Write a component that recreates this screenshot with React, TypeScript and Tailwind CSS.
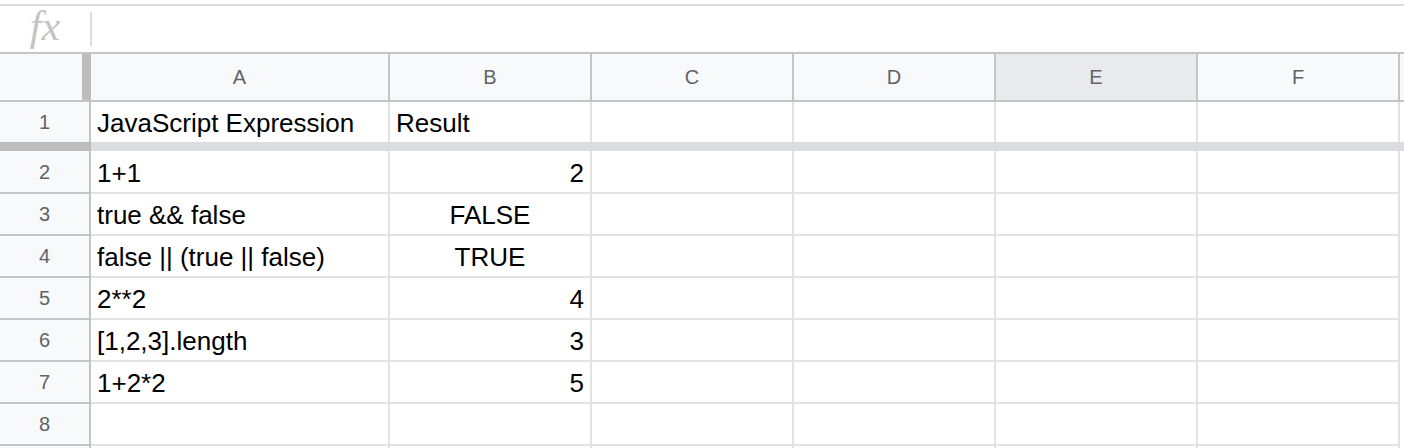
import React from "react";

type Align = "left" | "right" | "center";
type Cell = { text: string; align: Align };

const columns = [
    { label: "A", width: "w-[299px]" },
    { label: "B", width: "w-[202px]" },
    { label: "C", width: "w-[202px]" },
    { label: "D", width: "w-[202px]" },
    { label: "E", width: "w-[202px]" },
    { label: "F", width: "w-[202px]" },
];

const header: Cell[] = [
    { text: "JavaScript Expression", align: "left" },
    { text: "Result", align: "left" },
];

// rows 2..9 (row 9 only peeks in at the bottom)
const rows: Cell[][] = [
    [{ text: "1+1", align: "left" }, { text: "2", align: "right" }],
    [{ text: "true && false", align: "left" }, { text: "FALSE", align: "center" }],
    [{ text: "false || (true || false)", align: "left" }, { text: "TRUE", align: "center" }],
    [{ text: "2**2", align: "left" }, { text: "4", align: "right" }],
    [{ text: "[1,2,3].length", align: "left" }, { text: "3", align: "right" }],
    [{ text: "1+2*2", align: "left" }, { text: "5", align: "right" }],
    [],
    [],
];

const alignClass = (a: Align) =>
    a === "right" ? "justify-end pr-[6px]" : a === "center" ? "justify-center" : "justify-start pl-[6px]";

function DataRow({ num, cells, height }: { num: number | null; cells: Cell[]; height: string }) {
    return (
        <div className={`flex ${height}`}>
            <div className="w-[91px] shrink-0 flex items-center justify-center bg-[#f8f9fa] border-r-2 border-b-2 border-[#c4c4c4] text-[20px] text-[#5f6368]">
                {num}
            </div>
            {columns.map((col, i) => {
                const cell = cells[i];
                return (
                    <div
                        key={col.label}
                        className={`${col.width} shrink-0 flex items-center pt-[3px] border-r-2 border-b-2 border-[#e2e2e3] text-[26px] text-black whitespace-nowrap overflow-hidden ${cell ? alignClass(cell.align) : ""}`}
                    >
                        {cell?.text}
                    </div>
                );
            })}
        </div>
    );
}

export default function App() {
    return (
        <div className="w-[1404px] h-[448px] overflow-hidden bg-white font-['Liberation_Sans',Arial,sans-serif]">
            {/* formula bar */}
            <div className="pt-[4px]">
                <div className="h-[50px] border-t-2 border-b-2 border-t-[#dcdcdc] border-b-[#c4c4c4] flex items-center">
                    <div className="w-[90px] flex justify-center">
                        <span className="font-['Liberation_Serif',serif] italic text-[42px] leading-none text-[#c4c4c4] -mt-[6px]">fx</span>
                    </div>
                    <div className="w-[2px] h-[34px] bg-[#dadce0]" />
                </div>
            </div>

            {/* column headers */}
            <div className="flex h-[48px] bg-[#f8f9fa] border-b-2 border-[#c4c4c4]">
                <div className="w-[91px] shrink-0 flex">
                    <div className="w-[82px]" />
                    <div className="w-[9px] bg-[#bdbdbd]" />
                </div>
                {columns.map((col) => (
                    <div
                        key={col.label}
                        className={`${col.width} shrink-0 flex items-center justify-center border-r-2 border-[#c4c4c4] text-[20px] text-[#5f6368] ${col.label === "E" ? "bg-[#e8eaed]" : ""}`}
                    >
                        {col.label}
                    </div>
                ))}
            </div>

            {/* frozen row 1 */}
            <div className="flex h-[40px]">
                <div className="w-[91px] shrink-0 flex items-center justify-center bg-[#f8f9fa] border-r-2 border-[#c4c4c4] text-[20px] text-[#5f6368]">
                    1
                </div>
                {columns.map((col, i) => {
                    const cell = header[i];
                    return (
                        <div
                            key={col.label}
                            className={`${col.width} shrink-0 flex items-center pt-[3px] border-r-2 border-[#e2e2e3] text-[26px] text-black whitespace-nowrap ${cell ? alignClass(cell.align) : ""}`}
                        >
                            {cell?.text}
                        </div>
                    );
                })}
            </div>

            {/* freeze band */}
            <div className="flex h-[9px]">
                <div className="w-[91px] shrink-0 bg-[#bdbdbd]" />
                <div className="flex-1 bg-[#dadce0]" />
            </div>

            {rows.map((cells, i) => (
                <DataRow
                    key={i}
                    num={i < 7 ? i + 2 : null}
                    cells={cells}
                    height={i === 0 ? "h-[43px]" : "h-[42px]"}
                />
            ))}
        </div>
    );
}
